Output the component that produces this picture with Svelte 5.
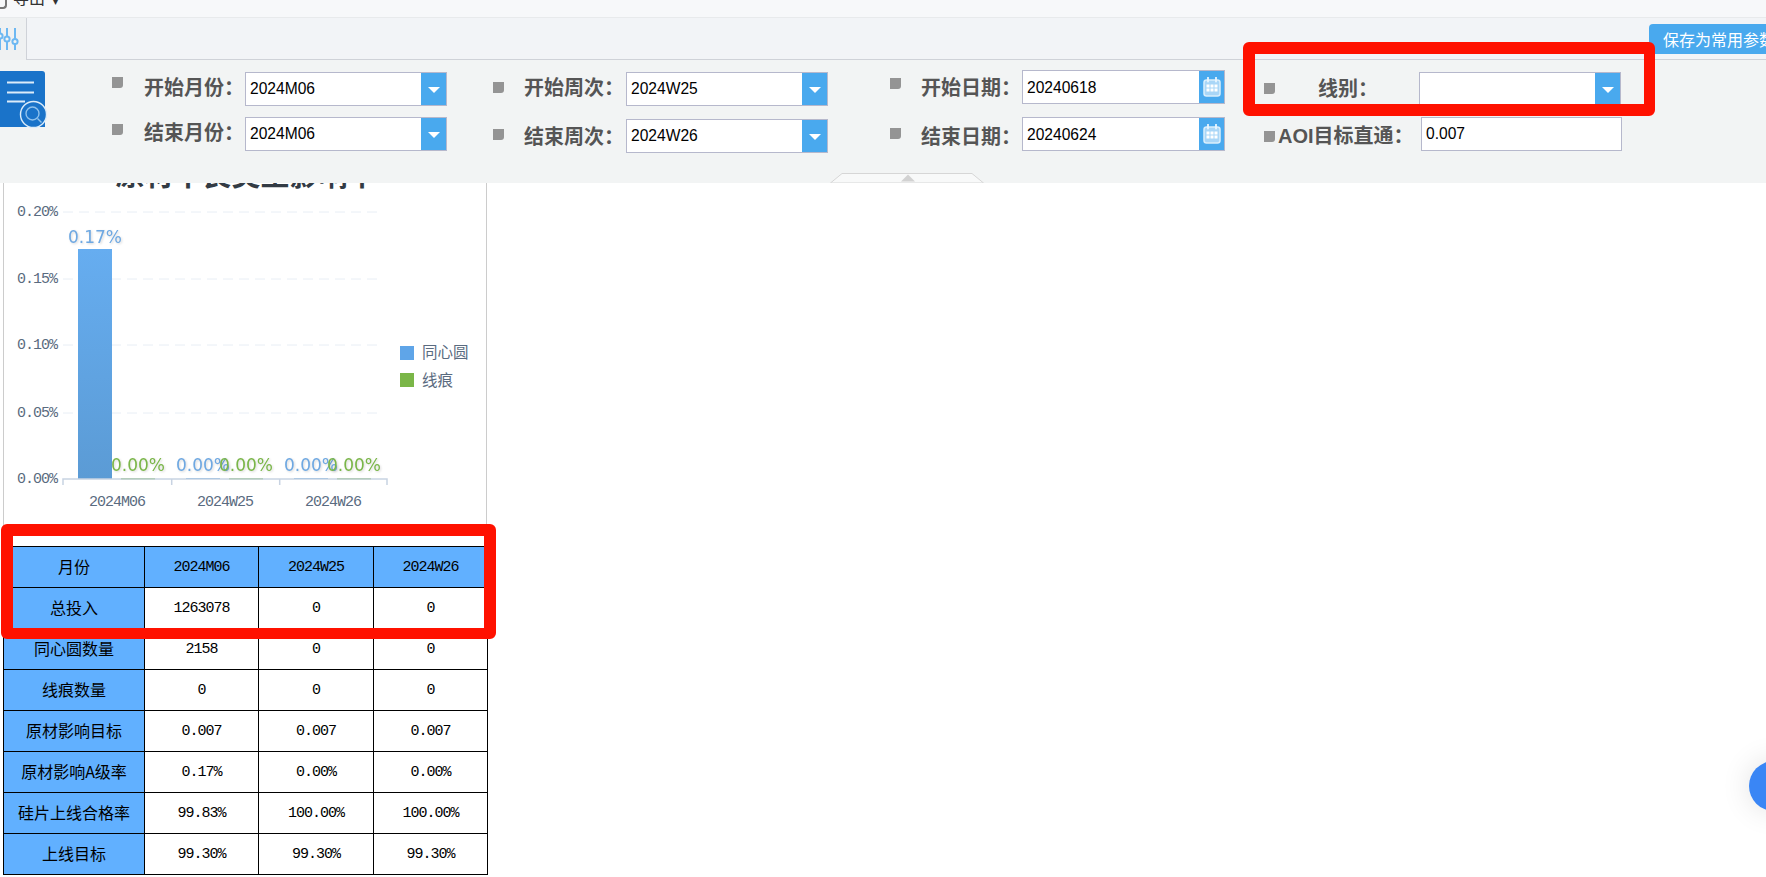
<script>
  const columns = ['2024M06', '2024W25', '2024W26']
  const rows = [
    ['总投入', '1263078', '0', '0'],
    ['同心圆数量', '2158', '0', '0'],
    ['线痕数量', '0', '0', '0'],
    ['原材影响目标', '0.007', '0.007', '0.007'],
    ['原材影响A级率', '0.17%', '0.00%', '0.00%'],
    ['硅片上线合格率', '99.83%', '100.00%', '100.00%'],
    ['上线目标', '99.30%', '99.30%', '99.30%']
  ]

  const ticks = [
    { label: '0.20%', y: 212 },
    { label: '0.15%', y: 279 },
    { label: '0.10%', y: 345 },
    { label: '0.05%', y: 413 },
    { label: '0.00%', y: 479 }
  ]

  const groups = [
    { name: '2024M06', x: 78, blueTop: 249 },
    { name: '2024W25', x: 186, blueTop: 478 },
    { name: '2024W26', x: 294, blueTop: 478 }
  ]
</script>

{#snippet combo(value)}
  <div class="combo">
    <span class="combo-text">{value}</span>
    <span class="combo-btn"><i class="caret"></i></span>
  </div>
{/snippet}

{#snippet dateBox(value)}
  <div class="date">
    <span class="combo-text">{value}</span>
    <span class="date-btn">
      <svg width="18" height="20" viewBox="0 0 18 20">
        <rect x="1" y="3" width="16" height="16" rx="2.5" fill="#a9d6f7" stroke="#d9eefc" stroke-width="1.500" />
        <path d="M5 0.500v4M13 0.500v4" stroke="#eaf6fe" stroke-width="1.800" stroke-linecap="round" />
        <path d="M3.500 7.500h3v3h-3zM7.500 7.500h3v3h-3zM11.500 7.500h3v3h-3zM3.500 11.500h3v3h-3zM7.500 11.500h3v3h-3zM11.500 11.500h3v3h-3z" fill="#fff" />
      </svg>
    </span>
  </div>
{/snippet}

<div class="page">
  <header class="head">
    <div class="topbar">
      <span class="export-icon"></span>
      <span class="export">导出</span>
      <span class="export-caret">▾</span>
    </div>

    <div class="tabbar">
      <div class="tab">
        <svg width="26" height="28" viewBox="0 0 26 28">
          <g stroke="#6db8f2" stroke-width="2" fill="#f2f4f4">
            <path d="M0 2v22M7 2v22M15 2v22" />
            <circle cx="0" cy="10" r="2.600" />
            <circle cx="7" cy="13" r="2.600" />
            <circle cx="15" cy="15.500" r="2.600" />
          </g>
        </svg>
      </div>
      <button class="save">保存为常用参数</button>
    </div>

    <div class="panel">
      <div class="logo">
        <svg width="48" height="58" viewBox="0 0 48 58">
          <path d="M0 1h42a3 3 0 0 1 3 3v53H0z" fill="#1a73c9" />
          <path d="M7 12.500h27M7 22.500h27M7 31.500h18" stroke="#dcecf9" stroke-width="2" />
          <circle cx="33.500" cy="44.500" r="13" fill="#1a73c9" stroke="#dcecf9" stroke-width="1.400" />
          <circle cx="32.500" cy="43.500" r="6.500" fill="none" stroke="#8fc1ec" stroke-width="1.400" />
          <path d="M37.500 48.500l4 4" stroke="#8fc1ec" stroke-width="1.400" />
        </svg>
      </div>

      <div class="col col-month">
        <div class="field f-month-1"><i class="dot"></i><label>开始月份：</label>{@render combo('2024M06')}</div>
        <div class="field f-month-2"><i class="dot"></i><label>结束月份：</label>{@render combo('2024M06')}</div>
      </div>

      <div class="col col-week">
        <div class="field f-week-1"><i class="dot"></i><label>开始周次：</label>{@render combo('2024W25')}</div>
        <div class="field f-week-2"><i class="dot"></i><label>结束周次：</label>{@render combo('2024W26')}</div>
      </div>

      <div class="col col-date">
        <div class="field f-date-1"><i class="dot"></i><label>开始日期：</label>{@render dateBox('20240618')}</div>
        <div class="field f-date-2"><i class="dot"></i><label>结束日期：</label>{@render dateBox('20240624')}</div>
      </div>

      <div class="col col-line">
        <div class="field f-line-1"><i class="dot"></i><label class="line-label">线别：</label>{@render combo('')}</div>
        <div class="field f-line-2"><i class="dot"></i><label class="aoi-label">AOI目标直通：</label><div class="plain">0.007</div></div>
      </div>

      <div class="collapse">
        <svg width="154" height="10" viewBox="0 0 154 10">
          <path d="M0.500 10L12 0.500h130L153.500 10z" fill="#f8f9f9" stroke="#d6d6d6" />
          <path d="M71 8.500l7-7 7 7z" fill="#d2d2d2" />
        </svg>
      </div>
    </div>
  </header>

  <main class="content">
    <section class="card">
      <h2 class="title">原材不良类型影响率</h2>
      <svg class="chart" width="484" height="345" viewBox="3 170 484 345">
        <defs>
          <linearGradient id="blue" x1="0" y1="0" x2="0" y2="1">
            <stop offset="0" stop-color="#66adf0" />
            <stop offset="1" stop-color="#5b9bd5" />
          </linearGradient>
        </defs>

        {#each ticks as t}
          <text class="axis" x="57" y={t.y + 4} text-anchor="end">{t.label}</text>
          {#if t.y < 479}
            <line x1="63" x2="381" y1={t.y} y2={t.y} stroke="#e8eef5" stroke-dasharray="10 6" />
          {/if}
        {/each}

        {#each groups as g, i}
          <rect x={g.x} y={g.blueTop} width="34" height={479 - g.blueTop} fill="url(#blue)" />
          <rect x={g.x + 43} y="478" width="34" height="1.500" fill="#7ab648" />
          <text class="val blue" x={g.x + 17} y={i === 0 ? 243 : 471} text-anchor="middle">{i === 0 ? '0.17%' : '0.00%'}</text>
          <text class="val green" x={g.x + 60} y="471" text-anchor="middle">0.00%</text>
          <text class="axis" x={g.x + 39} y="506" text-anchor="middle">{g.name}</text>
        {/each}

        <path d="M63 485v-6h324v6M171.700 479v6M279.700 479v6" fill="none" stroke="#c8d3e2" stroke-width="1.500" />

        <rect x="400" y="346" width="14" height="14" fill="#5fa5e8" />
        <text class="legend" x="422" y="358">同心圆</text>
        <rect x="400" y="373" width="14" height="14" fill="#7ab648" />
        <text class="legend" x="422" y="386">线痕</text>
      </svg>
    </section>

    <table>
      <colgroup>
        <col class="c0" />
        <col class="c1" />
        <col class="c2" />
        <col class="c3" />
      </colgroup>
      <tbody>
        <tr>
          <th class="h">月份</th>
          {#each columns as c}<th class="h num">{c}</th>{/each}
        </tr>
        {#each rows as r}
          <tr>
            <th class="h">{r[0]}</th>
            {#each r.slice(1) as v}<td class="num">{v}</td>{/each}
          </tr>
        {/each}
      </tbody>
    </table>
  </main>

  <i class="mark mark-line"></i>
  <i class="mark mark-table"></i>
  <i class="fab"></i>
</div>

<style>
  :global(body) {
    margin: 0;
    background: #fff;
    overflow: hidden;
    font-family: "Liberation Sans", "Noto Sans CJK SC", sans-serif;
  }

  .page {
    position: relative;
    width: 1766px;
    height: 877px;
    overflow: hidden;
  }

  .head {
    position: relative;
    z-index: 2;
  }

  .topbar {
    height: 17px;
    background: #f7f8fa;
    border-bottom: 1px solid #e8eaec;
    display: flex;
    align-items: flex-start;
    overflow: hidden;
    color: #333;
  }

  .export-icon {
    width: 7px;
    height: 9px;
    border: 2px solid #777;
    border-left: 0;
    border-top: 0;
    border-radius: 0 0 4px 0;
    box-sizing: border-box;
  }

  .export {
    margin-left: 6px;
    margin-top: -9px;
    font-size: 16px;
    line-height: 16px;
  }

  .export-caret {
    margin-left: 8px;
    margin-top: -3px;
    font-size: 10px;
    line-height: 10px;
  }

  .tabbar {
    height: 41px;
    background: #f2f4f7;
    border-bottom: 1px solid #cfd2d8;
    display: flex;
    justify-content: space-between;
  }

  .tab {
    width: 27px;
    height: 42px;
    box-sizing: border-box;
    background: #eff1f2;
    border-right: 1px solid #cfd2d8;
    padding-top: 8px;
  }

  .save {
    margin-top: 6px;
    height: 30px;
    width: 117px;
    padding: 0 0 0 14px;
    border: 0;
    border-radius: 4px 0 0 0;
    background: #49a9ee;
    color: #fff;
    font: 16px "Liberation Sans", "Noto Sans CJK SC", sans-serif;
    text-align: left;
    white-space: nowrap;
    overflow: hidden;
  }

  .panel {
    position: relative;
    height: 123px;
    background: #f2f4f4;
    display: flex;
    align-items: flex-start;
  }

  .logo {
    width: 112px;
    padding-top: 10px;
    flex: none;
    line-height: 0;
  }

  .col {
    flex: none;
    padding-top: 12px;
    display: flex;
    flex-direction: column;
  }

  .col-month { width: 381px; gap: 11px; }
  .col-week { width: 397px; gap: 13px; }
  .col-date { width: 374px; gap: 13px; padding-top: 10px; }
  .col-line { gap: 11px; }

  .col-week label { padding-left: 20px; }
  .col-date label { width: 121px; padding-left: 20px; }
  .col-date .combo-text { padding-top: 2px; }

  .field {
    display: flex;
    align-items: flex-start;
    height: 34px;
  }

  /* dots and labels don't sit on one line in this form, each row has its own offset */
  .f-month-1 { --dot: 5px; --lbl: 0; }
  .f-month-2 { --dot: 7px; --lbl: 0; }
  .f-week-1 { --dot: 10px; --lbl: 0; }
  .f-week-2 { --dot: 10px; --lbl: 2px; }
  .f-date-1 { --dot: 8px; --lbl: 2px; }
  .f-date-2 { --dot: 11px; --lbl: 4px; }
  .f-line-1 { --dot: 11px; --lbl: 1px; }
  .f-line-2 { --dot: 14px; --lbl: 3px; }

  .dot {
    width: 11px;
    height: 11px;
    flex: none;
    margin-top: var(--dot);
    background: #949494;
    border-radius: 0 0 3px 0;
  }

  label {
    width: 122px;
    flex: none;
    margin-top: var(--lbl);
    padding-left: 21px;
    box-sizing: border-box;
    font-weight: 700;
    font-size: 20px;
    line-height: 32px;
    color: #555;
    white-space: nowrap;
  }

  .line-label {
    width: 144px;
    padding-left: 43px;
  }

  .aoi-label {
    width: 146px;
    padding-left: 3px;
  }

  .combo, .date, .plain {
    height: 34px;
    box-sizing: border-box;
    background: #fff;
    border: 1px solid #b6b8cc;
    display: flex;
    align-items: center;
    font-size: 15.600px;
    color: #000;
  }

  .combo { width: 202px; }
  .date { width: 203px; }
  .plain { width: 201px; padding-left: 4px; }

  .combo-text {
    flex: 1;
    padding-left: 4px;
  }

  .combo-btn {
    width: 25px;
    align-self: stretch;
    background: #49a9ee;
    display: flex;
    align-items: center;
    justify-content: center;
  }

  .caret {
    border-left: 6px solid transparent;
    border-right: 6px solid transparent;
    border-top: 6px solid #fff;
    margin-top: 2px;
  }

  .date-btn {
    width: 25px;
    align-self: stretch;
    background: #49a9ee;
    display: flex;
    align-items: center;
    justify-content: center;
  }

  .collapse {
    position: absolute;
    left: 830px;
    bottom: 0;
    line-height: 0;
  }

  /* chart title runs under the filter panel */
  .content {
    margin-top: -30px;
    padding-left: 3px;
    width: 484px;
  }

  .card {
    height: 393px;
    border: 1px solid #ccc;
    border-width: 0 1px;
    box-sizing: border-box;
    position: relative;
  }

  .title {
    margin: 0;
    padding-top: 6px;
    padding-left: 2px;
    text-align: center;
    font-size: 29px;
    line-height: 34px;
    font-weight: 700;
    color: #333b44;
    white-space: nowrap;
  }

  .chart {
    position: absolute;
    left: -1px;
    top: 17px;
  }

  .chart text {
    font-family: "Liberation Mono", "Noto Sans CJK SC", monospace;
  }

  .chart .axis {
    font-size: 15px;
    letter-spacing: -1px;
    fill: #5a6b80;
  }

  .chart .legend {
    font-family: "Noto Sans CJK SC", sans-serif;
    font-size: 15.500px;
    fill: #5a6b80;
  }

  .chart .val {
    font-family: "DejaVu Sans", sans-serif;
    font-size: 17px;
    filter: drop-shadow(1px 1px 1px rgba(0, 0, 0, 0.16));
  }

  .blue { fill: #6ea8e2; }
  .green { fill: #7ab648; }

  table {
    width: 484px;
    table-layout: fixed;
    border-collapse: collapse;
    background: #fff;
    color: #000;
  }

  .c0 { width: 141px; }
  .c1 { width: 114px; }
  .c2 { width: 115px; }
  .c3 { width: 114px; }

  tr { height: 41px; }

  th, td {
    border: 1px solid #000;
    padding: 0;
    text-align: center;
    font-weight: 400;
  }

  th.h {
    background: #61b0ff;
    padding-bottom: 3px;
    font-family: "Noto Sans CJK SC", sans-serif;
    font-size: 16px;
  }

  th.h.num {
    padding: 1px 0 0;
  }

  th.h.num, .num {
    font-family: "Liberation Mono", monospace;
    font-size: 15px;
    letter-spacing: -1px;
  }

  /* red annotation boxes drawn over the screenshot */
  .mark {
    position: absolute;
    box-sizing: border-box;
    border: 12px solid #ff1100;
    border-radius: 6px;
    z-index: 3;
  }

  .mark-line {
    left: 1243px;
    top: 42px;
    width: 412px;
    height: 74px;
    border-width: 12px 11px 12px 12px;
  }

  .mark-table {
    left: 1px;
    top: 524px;
    width: 495px;
    height: 115px;
    border-width: 12px 12px 11px 12px;
  }

  .fab {
    position: absolute;
    left: 1749px;
    top: 761px;
    width: 50px;
    height: 50px;
    border-radius: 50%;
    background: #3a86f5;
    box-shadow: 0 0 30px rgba(0, 0, 0, 0.12);
    z-index: 3;
  }
</style>
